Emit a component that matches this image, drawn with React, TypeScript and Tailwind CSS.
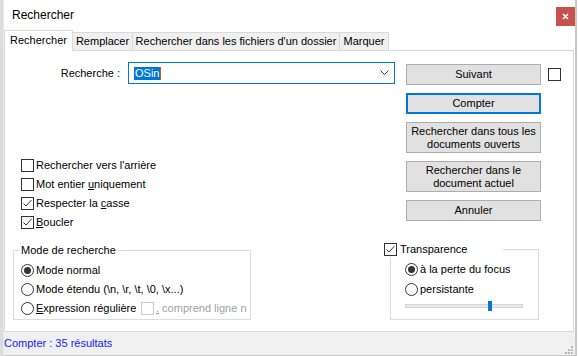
import React from 'react'

const font = "font-['Liberation_Sans',Arial,sans-serif]"

function CheckBox({ checked, disabled }: { checked?: boolean; disabled?: boolean }) {
  return (
    <span
      className={`inline-flex h-[13px] w-[13px] shrink-0 items-center justify-center border bg-white ${
        disabled ? 'border-[#cccccc]' : 'border-[#333333]'
      }`}
    >
      {checked && (
        <svg width="11" height="11" viewBox="0 0 11 11">
          <path d="M1.5 5.5 L4 8 L9.5 2" fill="none" stroke="#333333" strokeWidth="1" />
        </svg>
      )}
    </span>
  )
}

function Radio({ checked }: { checked?: boolean }) {
  return (
    <span className="inline-flex h-[13px] w-[13px] shrink-0 items-center justify-center rounded-full border border-[#333333] bg-white">
      {checked && <span className="h-[7px] w-[7px] rounded-full bg-[#333333]" />}
    </span>
  )
}

function Button({ children, tall, focused }: { children: React.ReactNode; tall?: boolean; focused?: boolean }) {
  return (
    <div
      className={`flex w-[135px] items-center justify-center bg-[#e1e1e1] text-center leading-[13px] ${
        tall ? 'h-[31px]' : 'h-[21px]'
      } ${focused ? 'border-2 border-[#0078d7]' : 'border border-[#adadad]'}`}
    >
      <span>{children}</span>
    </div>
  )
}

export default function App() {
  return (
    <div className={`flex h-[356px] w-[578px] overflow-hidden bg-white text-[11px] text-black ${font}`}>
      <div className="w-[3px] bg-[#dcdcdc]" />
      <div className="w-px bg-[#e8e8e8]" />

      <div className="flex w-[571px] flex-col">
        {/* title bar */}
        <div className="flex h-[30px] justify-between">
          <span className="self-center pl-[8px] text-[12px]">Rechercher</span>
          <div className="mt-[7px] flex h-[19px] w-[19px] items-center justify-center bg-[#c75050]">
            <svg width="7" height="7" viewBox="0 0 7 7">
              <path d="M1 1 L6 6 M6 1 L1 6" stroke="white" strokeWidth="1.6" />
            </svg>
          </div>
        </div>

        {/* tabs */}
        <div className="relative z-10 -mb-px flex h-[21px] items-end">
          <div className="flex h-[21px] w-[69px] items-center justify-center border-x border-t border-[#d9d9d9] bg-white pb-[2px]">
            Rechercher
          </div>
          <div className="flex h-[19px] w-[60px] items-center justify-center border-y border-r border-[#d9d9d9] bg-[#f0f0f0]">
            Remplacer
          </div>
          <div className="flex h-[19px] w-[207px] items-center justify-center border-y border-r border-[#d9d9d9] bg-[#f0f0f0]">
            Rechercher dans les fichiers d'un dossier
          </div>
          <div className="flex h-[19px] w-[49px] items-center justify-center border-y border-r border-[#d9d9d9] bg-[#f0f0f0]">
            Marquer
          </div>
        </div>

        {/* panel */}
        <div className="flex h-[282px] w-[570px] flex-col border border-[#d9d9d9] bg-white">
          <div className="flex h-[190px]">
            <div className="flex w-[390px] flex-col">
              <div className="mt-[11px] flex items-center">
                <span className="w-[115px] text-right">Recherche :</span>
                <div className="ml-[8px] flex h-[22px] w-[267px] items-center border border-[#0078d7] pl-[5px] pr-[5px]">
                  <span className="bg-[#0078d7] px-px leading-[13px] text-white">OSin</span>
                  <span className="h-[13px] w-px bg-[#c86400]" />
                  <svg className="ml-auto" width="9" height="6" viewBox="0 0 9 6">
                    <path d="M0.5 0.5 L4.5 4.5 L8.5 0.5" fill="none" stroke="#444444" strokeWidth="1" />
                  </svg>
                </div>
              </div>

              <div className="mt-[75px] flex flex-col gap-[6px] pl-[16px]">
                <label className="flex h-[13px] items-center gap-[2px]">
                  <CheckBox />
                  <span>Rechercher vers l'arrière</span>
                </label>
                <label className="flex h-[13px] items-center gap-[2px]">
                  <CheckBox />
                  <span>
                    Mot entier <span className="underline">u</span>niquement
                  </span>
                </label>
                <label className="flex h-[13px] items-center gap-[2px]">
                  <CheckBox checked />
                  <span>
                    Respecter la <span className="underline">c</span>asse
                  </span>
                </label>
                <label className="flex h-[13px] items-center gap-[2px]">
                  <CheckBox checked />
                  <span>
                    <span className="underline">B</span>oucler
                  </span>
                </label>
              </div>
            </div>

            <div className="ml-[11px] mt-[13px] flex flex-col gap-[8px]">
              <Button>Suivant</Button>
              <Button focused>Compter</Button>
              <Button tall>
                Rechercher dans tous les
                <br />
                documents ouverts
              </Button>
              <Button tall>
                Rechercher dans le
                <br />
                document actuel
              </Button>
              <Button>Annuler</Button>
            </div>
            <div className="ml-[7px] mt-[17px]">
              <CheckBox />
            </div>
          </div>

          <div className="flex items-start">
            <fieldset className="ml-[8px] mt-[1px] h-[78px] w-[238px] border border-[#dcdcdc]">
              <legend className="ml-[5px] px-[2px] leading-[16px]">Mode de recherche</legend>
              <div className="flex flex-col pl-[7px] pt-[3px]">
                <div className="flex h-[19px] items-center gap-[2px]">
                  <Radio checked />
                  <span>Mode normal</span>
                </div>
                <div className="flex h-[19px] items-center gap-[2px]">
                  <Radio />
                  <span>Mode étendu (\n, \r, \t, \0, \x...)</span>
                </div>
                <div className="flex h-[19px] items-center whitespace-nowrap">
                  <Radio />
                  <span className="ml-[2px] w-[105px] shrink-0">
                    <span className="underline">E</span>xpression régulière
                  </span>
                  <CheckBox disabled />
                  <span className="ml-[2px] text-[#a0a0a0]">
                    <span className="underline">.</span> comprend ligne n
                  </span>
                </div>
              </div>
            </fieldset>

            <fieldset className="ml-[139px] h-[79px] w-[149px] border border-[#dcdcdc]">
              <legend className="-ml-[7px] flex h-[16px] w-[119px] items-center gap-[3px] bg-white">
                <CheckBox checked />
                <span>Transparence</span>
              </legend>
              <div className="flex flex-col pl-[14px] pt-[2px]">
                <div className="flex h-[20px] items-center gap-[2px]">
                  <Radio checked />
                  <span>à la perte du focus</span>
                </div>
                <div className="flex h-[20px] items-center gap-[2px]">
                  <Radio />
                  <span>persistante</span>
                </div>
                <div className="mt-[1px] flex h-[12px] items-center">
                  <div className="relative h-[4px] w-[118px] border border-[#d6d6d6] bg-[#e7eaea]">
                    <span className="absolute -top-[4px] left-[82px] h-[10px] w-[4px] bg-[#0078d7]" />
                  </div>
                </div>
              </div>
            </fieldset>
          </div>
        </div>

        {/* status bar */}
        <div className="flex h-[24px] items-center justify-between border-b border-[#c8c8c8] bg-[#f0f0f0]">
          <span className="text-[#1a1aff]">Compter : 35 résultats</span>
          <svg className="mr-[1px] mt-[12px]" width="10" height="10" viewBox="0 0 10 10">
            <rect x="7" y="1" width="2" height="2" fill="#b8b8b8" />
            <rect x="4" y="4" width="2" height="2" fill="#b8b8b8" />
            <rect x="7" y="4" width="2" height="2" fill="#b8b8b8" />
            <rect x="1" y="7" width="2" height="2" fill="#b8b8b8" />
            <rect x="4" y="7" width="2" height="2" fill="#b8b8b8" />
            <rect x="7" y="7" width="2" height="2" fill="#b8b8b8" />
          </svg>
        </div>
      </div>

      <div className="w-[2px] bg-[#c9c9c9]" />
      <div className="w-px bg-white" />
    </div>
  )
}
